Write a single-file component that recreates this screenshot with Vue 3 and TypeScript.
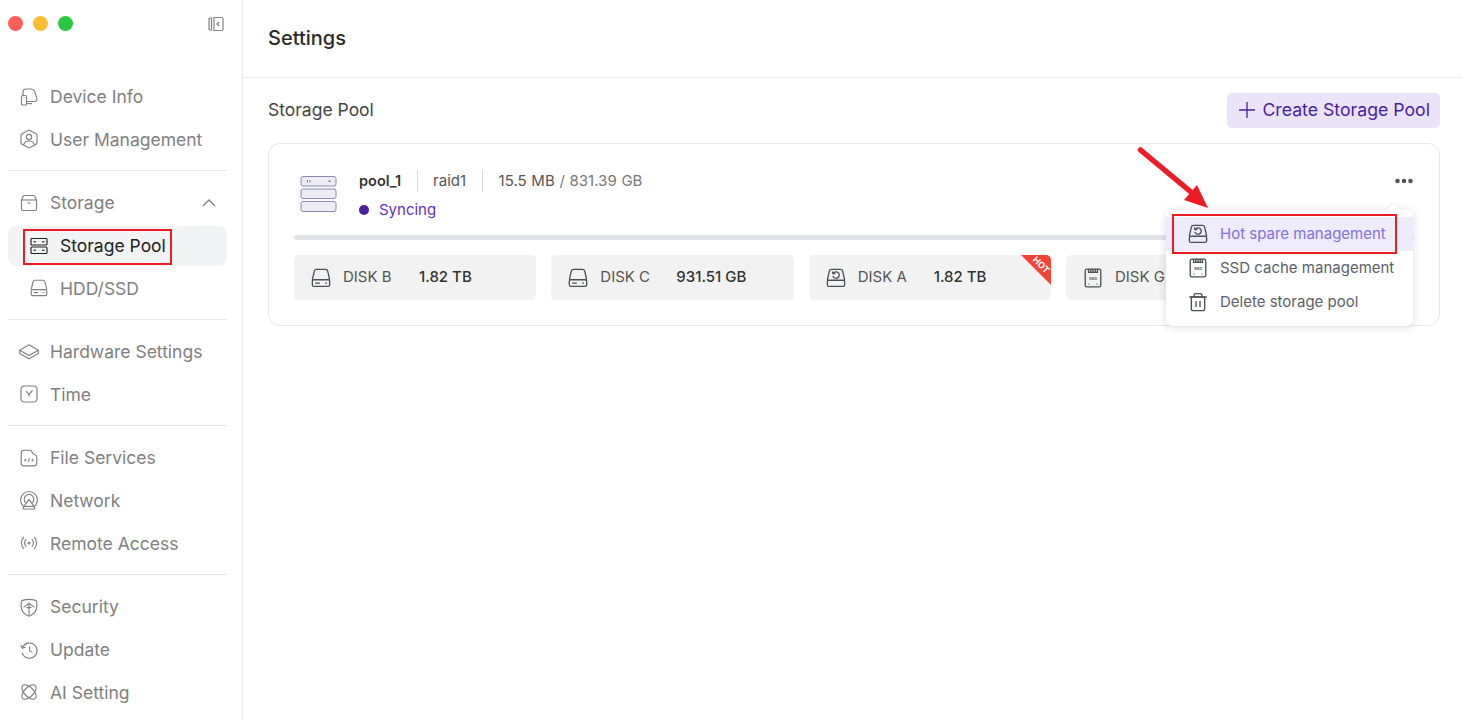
<script setup lang="ts">
interface NavItem {
  label: string
  icon: string
  active?: boolean
  sub?: boolean
  chevron?: boolean
}

// each icon is a list of path strings on an 18x18 box
const icons: Record<string, string[]> = {
  device: [
    'M2.5 7.5H5.5Q6.5 7.5 6.5 8.5V16Q6.5 17 5.5 17H2.5Q1.5 17 1.5 16V8.5Q1.5 7.5 2.5 7.5Z',
    'M3 7.5V4C3 2.3 4.3 1 6 1H11.5C13 1 14 1.8 14.5 3.2L16.8 10C17.4 12 16.5 13.5 14.5 13.5H6.5',
    'M6.5 15.6H12',
    'M3.5 9.5H4.5',
  ],
  user: [
    'M8 .4Q9 -.1 10 .4L16 3.8Q17 4.3 17 5.3V12.7Q17 13.7 16 14.2L10 17.6Q9 18.1 8 17.6L2 14.2Q1 13.7 1 12.7V5.3Q1 4.3 2 3.8Z',
    'M11.6 7A2.6 2.6 0 1 1 6.4 7A2.6 2.6 0 1 1 11.6 7Z',
    'M3.6 14.8C4.4 12.2 6.4 11 9 11S13.6 12.2 14.4 14.8',
  ],
  storage: [
    'M1.5 6L3.2 2.2Q3.6 1.5 4.4 1.5H13.6Q14.4 1.5 14.8 2.2L16.5 6V15Q16.5 16.5 15 16.5H3Q1.5 16.5 1.5 15Z',
    'M1.5 6H16.5',
    'M7.5 9H10.5',
  ],
  pool: [
    'M2 1.5H16Q17 1.5 17 2.5V7Q17 8 16 8H2Q1 8 1 7V2.5Q1 1.5 2 1.5Z',
    'M2 10H16Q17 10 17 11V15.5Q17 16.5 16 16.5H2Q1 16.5 1 15.5V11Q1 10 2 10Z',
    'M3.5 4.8H6',
    'M12 4.8H14.5',
    'M3.5 13.2H6',
    'M12 13.2H14.5',
  ],
  hdd: [
    'M1.2 10.5L3 2.8Q3.4 1.2 5 1.2H13Q14.6 1.2 15 2.8L16.8 10.5',
    'M2.5 10.6H15.5Q16.8 10.6 16.8 11.9V15Q16.8 16.6 15.3 16.6H2.7Q1.2 16.6 1.2 15V11.9Q1.2 10.6 2.5 10.6Z',
    'M3.8 13.6H8',
    'M12.8 13.6H14.4',
  ],
  hardware: [
    'M9 1.8L18.4 7.2 9 12.6 -.4 7.2Z',
    'M-.4 7.2V10.4L9 15.8 18.4 10.4V7.2',
  ],
  time: [
    'M4.5 1H13.5Q17 1 17 4.5V13.5Q17 17 13.5 17H4.5Q1 17 1 13.5V4.5Q1 1 4.5 1Z',
    'M6 6.2L9 9.5 12.5 5.5',
    'M9 9.5V11.5',
  ],
  file: [
    'M4 1.2H10Q11.5 1.2 11.8 2.7 12.4 5.2 14.8 5.8 16.8 6.3 16.8 8V14Q16.8 16.8 14 16.8H4Q1.2 16.8 1.2 14V4Q1.2 1.2 4 1.2Z',
    'M6 10L4.8 11.2 6 12.4',
    'M8 12.8L9.6 9.6',
    'M11.8 10L13 11.2 11.8 12.4',
  ],
  network: [
    'M3.4 14.2A8.4 8.4 0 1 1 14.6 14.2',
    'M5.8 10.8A4.8 4.8 0 1 1 12.2 10.8',
    'M9 7.4L14.8 15.6Q15.2 17 14 17H4Q2.8 17 3.2 15.6Z',
    'M3.4 14.4H14.6',
  ],
  remote: [
    'M3.8 3A8.6 8.6 0 0 0 3.8 15',
    'M6.2 5.2A5.2 5.2 0 0 0 6.2 12.8',
    'M14.2 3A8.6 8.6 0 0 1 14.2 15',
    'M11.8 5.2A5.2 5.2 0 0 1 11.8 12.8',
    'M10 9A1 1 0 1 1 8 9A1 1 0 1 1 10 9Z',
  ],
  security: [
    'M2 2.6Q9 .2 16 2.6 16.8 3 16.8 3.9V8.5C16.8 13 13 16.6 9 18.2 5 16.6 1.2 13 1.2 8.5V3.9Q1.2 3 2 2.6Z',
    'M3.6 9.4L9 5.2 14.4 9.4',
    'M9 5.2V17.6',
    'M6.4 9.6H11.6',
  ],
  update: [
    'M2.6 6.4A7.6 7.6 0 1 1 2.2 11.8',
    'M.8 4L2.4 7 5.6 6.2',
    'M9.6 5.2V9.6L12.4 11.6',
  ],
  ai: [
    'M2.6 2.6A9 4.6 45 0 1 15.4 15.4A9 4.6 45 0 1 2.6 2.6Z',
    'M15.4 2.6A9 4.6 -45 0 1 2.6 15.4A9 4.6 -45 0 1 15.4 2.6Z',
  ],
  spare: [
    'M1.2 11L3 2.8Q3.4 1.2 5 1.2H13Q14.6 1.2 15 2.8L16.8 11',
    'M2.5 11H15.5Q16.8 11 16.8 12.3V15Q16.8 16.6 15.3 16.6H2.7Q1.2 16.6 1.2 15V12.3Q1.2 11 2.5 11Z',
    'M6.6 4.8A2.9 2.9 0 1 1 6.2 7',
    'M5.8 3.2L6.4 5.2 8.4 4.8',
  ],
  ssd: [
    'M3.5 1H14.5Q16 1 16 2.5V15.5Q16 17 14.5 17H3.5Q2 17 2 15.5V2.5Q2 1 3.5 1Z',
    'M5 1V4H13V1',
    'M7 1V3.8M9 1V3.8M11 1V3.8',
    'M5 14.5H5.8',
    'M12.2 14.5H13',
  ],
  trash: [
    'M3 4.5H15V15Q15 16.8 13.2 16.8H4.8Q3 16.8 3 15Z',
    'M1 4.5H17',
    'M5.5 4.5V2.8Q5.5 1.4 6.9 1.4H11.1Q12.5 1.4 12.5 2.8V4.5',
    'M7.2 8V13.4',
    'M10.8 8V13.4',
  ],
}

const navGroups: NavItem[][] = [
  [
    { label: 'Device Info', icon: 'device' },
    { label: 'User Management', icon: 'user' },
  ],
  [
    { label: 'Storage', icon: 'storage', chevron: true },
    { label: 'Storage Pool', icon: 'pool', active: true, sub: true },
    { label: 'HDD/SSD', icon: 'hdd', sub: true },
  ],
  [
    { label: 'Hardware Settings', icon: 'hardware' },
    { label: 'Time', icon: 'time' },
  ],
  [
    { label: 'File Services', icon: 'file' },
    { label: 'Network', icon: 'network' },
    { label: 'Remote Access', icon: 'remote' },
  ],
  [
    { label: 'Security', icon: 'security' },
    { label: 'Update', icon: 'update' },
    { label: 'AI Setting', icon: 'ai' },
  ],
]

const disks = [
  { name: 'DISK B', size: '1.82 TB', icon: 'hdd' },
  { name: 'DISK C', size: '931.51 GB', icon: 'hdd' },
  { name: 'DISK A', size: '1.82 TB', icon: 'spare', hot: true },
  { name: 'DISK G', size: '931.51 GB', icon: 'ssd' },
]

const menu = [
  { label: 'Hot spare management', icon: 'spare', active: true },
  { label: 'SSD cache management', icon: 'ssd' },
  { label: 'Delete storage pool', icon: 'trash' },
]
</script>

<template>
  <div class="page">
    <aside class="sidebar">
      <div class="titlebar">
        <div class="lights">
          <span class="light red"></span>
          <span class="light yellow"></span>
          <span class="light green"></span>
        </div>
        <svg class="collapse" width="16" height="16" viewBox="0 0 16 16" fill="none" stroke="#808080" stroke-width="1.2">
          <path d="M6 1.5H13.5Q15 1.5 15 3V13Q15 14.5 13.5 14.5H6Z" />
          <path d="M3.5 2H2Q1 2 1 3V13Q1 14 2 14H3.5Z" />
          <path d="M11 6L9 8 11 10" stroke-width="1.4" />
        </svg>
      </div>
      <nav class="nav">
        <template v-for="(group, gIdx) in navGroups" :key="gIdx">
          <div v-if="gIdx > 0" class="divider"></div>
          <div
            v-for="item in group"
            :key="item.label"
            class="nav-item"
            :class="{ active: item.active, sub: item.sub }"
          >
            <svg class="nav-icon" width="18" height="18" viewBox="0 0 18 18" fill="none" stroke="currentColor" stroke-width="1.15">
              <path v-for="d in icons[item.icon]" :key="d" :d="d" />
            </svg>
            <span>{{ item.label }}</span>
            <svg v-if="item.chevron" class="chevron" width="14" height="8" viewBox="0 0 14 8" fill="none" stroke="#808080" stroke-width="1.3">
              <path d="M1 7L7 1 13 7" />
            </svg>
            <div v-if="item.active" class="mark mark-nav"></div>
          </div>
        </template>
      </nav>
    </aside>

    <main class="main">
      <header class="topbar">Settings</header>
      <section class="content">
        <div class="section-head">
          <h2>Storage Pool</h2>
          <button class="create">
            <svg width="16" height="16" viewBox="0 0 16 16" fill="none" stroke="currentColor" stroke-width="1.3">
              <path d="M8 0V16M0 8H16" />
            </svg>
            Create Storage Pool
          </button>
        </div>

        <div class="card">
          <div class="pool-head">
            <svg class="pool-icon" width="38" height="38" viewBox="0 0 38 38" fill="#ecedf4" stroke="#8c88b2" stroke-width="1">
              <rect x="1" y="1.5" width="35" height="9.5" rx="2" />
              <rect x="1" y="14" width="35" height="9.5" rx="2" />
              <rect x="1" y="26.5" width="35" height="10" rx="2" />
              <path d="M7.5 5V7.5M10 5V7.5" stroke="#77748f" />
              <circle cx="29.5" cy="6.2" r="1" fill="#77748f" stroke="none" />
            </svg>
            <div class="pool-info">
              <div class="pool-line">
                <span class="pool-name">pool_1</span>
                <i class="sep"></i>
                <span class="pool-raid">raid1</span>
                <i class="sep"></i>
                <span class="pool-used">15.5 MB <em>/ 831.39 GB</em></span>
              </div>
              <div class="pool-status"><i class="dot"></i>Syncing</div>
            </div>
          </div>

          <div class="progress"></div>

          <div class="disks">
            <div v-for="disk in disks" :key="disk.name" class="disk">
              <svg width="20" height="20" viewBox="0 0 18 18" fill="none" stroke="#4b4f55" stroke-width="1.2">
                <path v-for="d in icons[disk.icon]" :key="d" :d="d" />
                <text v-if="disk.icon === 'ssd'" x="9" y="10.4" class="ssd-label">SSD</text>
              </svg>
              <span class="disk-name">{{ disk.name }}</span>
              <span class="disk-size">{{ disk.size }}</span>
              <span v-if="disk.hot" class="ribbon"><b>HOT</b></span>
            </div>
          </div>

          <svg class="more" width="20" height="6" viewBox="0 0 20 6" fill="#50555c">
            <circle cx="3.5" cy="3" r="2.3" />
            <circle cx="10" cy="3" r="2.3" />
            <circle cx="16.5" cy="3" r="2.3" />
          </svg>

          <div class="menu">
            <i class="menu-tip"></i>
            <div v-for="row in menu" :key="row.label" class="menu-row" :class="{ active: row.active }">
              <svg width="20" height="20" viewBox="0 0 18 18" fill="none" stroke="#4b4f55" stroke-width="1.2">
                <path v-for="d in icons[row.icon]" :key="d" :d="d" />
                <text v-if="row.icon === 'ssd'" x="9" y="10.4" class="ssd-label">SSD</text>
              </svg>
              <span class="menu-label">{{ row.label }}</span>
              <div v-if="row.active" class="mark mark-menu"></div>
            </div>
          </div>
        </div>
      </section>
    </main>

    <svg class="arrow" width="90" height="80" viewBox="0 0 90 80">
      <path d="M3.5 4L54 46" stroke="#ed1c24" stroke-width="5.5" stroke-linecap="round" fill="none" />
      <path d="M71 62L60 39 47 54Z" fill="#ed1c24" />
    </svg>
  </div>
</template>

<style scoped>
.page {
  position: relative;
  display: flex;
  width: 1462px;
  height: 720px;
  overflow: hidden;
  background: #fff;
  color: #222;
  font-family: Inter, "Liberation Sans", sans-serif;
}

.sidebar {
  flex: none;
  box-sizing: border-box;
  width: 243px;
  padding: 0 15px 0 8px;
  border-right: 1px solid #ececee;
}
.titlebar {
  display: flex;
  align-items: center;
  justify-content: space-between;
  height: 47px;
  margin-bottom: 28.4px;
}
.lights {
  display: flex;
  gap: 10px;
}
.light {
  width: 15px;
  height: 15px;
  border-radius: 50%;
}
.red { background: #ff5f57; }
.yellow { background: #febc2e; }
.green { background: #28c840; }
.collapse {
  margin-right: 3px;
}

.nav-item {
  position: relative;
  display: flex;
  align-items: center;
  gap: 12px;
  height: 42.67px;
  padding-left: 12px;
  font-size: 17.5px;
  color: #808080;
}
.nav-item.sub {
  padding-left: 22px;
}
.nav-item.active {
  height: 40px;
  margin: 1.33px 0;
  background: #f2f3f5;
  border-radius: 8px;
  color: #222;
}
.nav-icon {
  flex: none;
  overflow: visible;
}
.chevron {
  margin-left: auto;
  margin-right: 11px;
}
.divider {
  height: 1px;
  margin: 9px 0 10.9px;
  background: #e8e8ea;
}

.mark {
  position: absolute;
  box-sizing: border-box;
  border: 2px solid #ed1c24;
  pointer-events: none;
}
.mark-nav {
  left: 15px;
  top: 3px;
  width: 149px;
  height: 36px;
}
.mark-menu {
  left: 6px;
  top: -3px;
  width: 225px;
  height: 40px;
}

.main {
  flex: 1;
  min-width: 0;
}
.topbar {
  box-sizing: border-box;
  height: 78px;
  padding: 26px 25px 0;
  border-bottom: 1px solid #ececee;
  font-size: 20px;
  line-height: 24px;
  font-weight: 500;
  color: #2a2a2a;
}
.content {
  padding: 15px 22px 0 25px;
}
.section-head {
  display: flex;
  align-items: center;
  justify-content: space-between;
  height: 35px;
  margin-bottom: 15px;
}
.section-head h2 {
  margin: 0 0 2px;
  font-size: 17.5px;
  font-weight: 400;
  color: #444;
}
.create {
  display: flex;
  align-items: center;
  gap: 7px;
  height: 35px;
  padding: 0 10px 2px 12px;
  border: 0;
  border-radius: 5px;
  background: #ebe3f9;
  color: #4a1ea0;
  font-family: inherit;
  font-size: 17.7px;
}

.card {
  position: relative;
  box-sizing: border-box;
  height: 183px;
  padding: 26px 25px 0;
  border: 1px solid #e8e8ea;
  border-radius: 12px;
}
.pool-head {
  display: flex;
  align-items: flex-start;
  gap: 21px;
  padding-left: 6px;
}
.pool-icon {
  margin-top: 5px;
}
.pool-line {
  display: flex;
  align-items: center;
  height: 22px;
  font-size: 15px;
}
.pool-line span {
  margin-bottom: 2px;
}
.pool-name {
  font-size: 14.5px;
  font-weight: 600;
  color: #333;
}
.sep {
  width: 1px;
  height: 22px;
  margin: 0 15.5px;
  background: #d5d6dc;
}
.pool-raid,
.pool-used {
  color: #555;
}
.pool-used {
  margin-left: 0.5px;
  word-spacing: 0.5px;
}
.pool-used em {
  font-style: normal;
  color: #777;
}
.pool-status {
  display: flex;
  align-items: center;
  gap: 10px;
  margin-top: 7.5px;
  font-size: 15px;
  line-height: 20px;
  color: #5f33c4;
}
.dot {
  width: 10px;
  height: 10px;
  margin-top: 1px;
  border-radius: 50%;
  background: #4a1ea0;
}
.progress {
  height: 4.5px;
  margin-top: 15.5px;
  border-radius: 3px;
  background: #e3e3ea;
}
.disks {
  display: flex;
  gap: 15px;
  margin-top: 15.5px;
  overflow: hidden;
}
.disk {
  position: relative;
  flex: none;
  display: flex;
  align-items: center;
  box-sizing: border-box;
  width: 242.33px;
  height: 45px;
  padding-left: 17px;
  border-radius: 5px;
  background: #f2f2f2;
  overflow: hidden;
  font-size: 15px;
}
.disk-name {
  width: 76px;
  margin: 0 0 1.5px 12px;
  color: #555;
}
.disk-size {
  margin-bottom: 1.5px;
  font-weight: 500;
  color: #333;
}
.ssd-label {
  font-size: 3.6px;
  font-weight: 600;
  text-anchor: middle;
  fill: #4b4f55;
  stroke: none;
}
.ribbon {
  position: absolute;
  top: 0;
  right: 0;
  width: 30px;
  height: 30px;
  background: #f44336;
  clip-path: polygon(0 0, 100% 0, 100% 100%);
}
.ribbon b {
  position: absolute;
  top: 5px;
  left: 5px;
  width: 30px;
  transform: rotate(45deg);
  text-align: center;
  font-size: 9px;
  line-height: 10px;
  font-weight: 700;
  color: #fff;
}
.more {
  position: absolute;
  top: 34px;
  right: 25px;
}
.menu {
  position: absolute;
  top: 66px;
  right: 26px;
  box-sizing: border-box;
  width: 247px;
  height: 116px;
  padding-top: 7px;
  border-radius: 6px;
  background: #fff;
  box-shadow: 0 1px 8px rgba(30, 30, 60, 0.16);
}
.menu-tip {
  position: absolute;
  top: -5px;
  right: 14px;
  width: 10px;
  height: 10px;
  background: #fff;
  transform: rotate(45deg);
  box-shadow: -1px -1px 2px rgba(30, 30, 60, 0.06);
}
.menu-row {
  position: relative;
  display: flex;
  align-items: center;
  gap: 12px;
  height: 34px;
  padding-left: 22px;
  font-size: 15px;
  color: #5a6068;
}
.menu-row.active {
  background: #eeebfb;
  color: #8470e0;
}
.menu-label {
  margin-bottom: 1.5px;
}

.arrow {
  position: absolute;
  left: 1137px;
  top: 146px;
}
</style>

<style>
html, body {
  margin: 0;
  background: #fff;
}
</style>
